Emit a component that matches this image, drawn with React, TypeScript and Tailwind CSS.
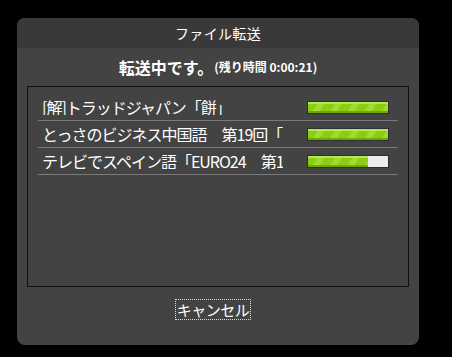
import React from 'react';

type Item = { title: string; progress: number };

const items: Item[] = [
  { title: '[解]トラッドジャパン「餅」', progress: 100 },
  { title: 'とっさのビジネス中国語　第19回「アポイントをとる」', progress: 100 },
  { title: 'テレビでスペイン語「EURO24　第12回」', progress: 75 },
];

function ProgressBar({ value }: { value: number }) {
  return (
    <div className="w-[80px] h-[11px] bg-[#ececec] shadow-[0_0_0_1px_#2f2f2f] shrink-0">
      <div
        className="h-full bg-[repeating-linear-gradient(120deg,#8ccd12_0px,#8ccd12_9px,#9edc34_9px,#9edc34_15px)] shadow-[inset_0_2px_0_#b2e853,inset_0_-2px_0_#6eaa05]"
        style={{ width: `${value}%` }}
      />
    </div>
  );
}

export default function App() {
  return (
    <div className="w-[452px] h-[357px] bg-black pt-[18px] pl-[17px] font-['Noto_Sans_CJK_JP',sans-serif]">
      <div className="w-[402px] h-[327px] bg-[#434343] rounded-[8px] overflow-hidden flex flex-col">
        {/* header */}
        <div className="h-[30px] bg-[#393939] flex items-center justify-center text-white text-[14px] tracking-wide">
          ファイル転送
        </div>

        {/* status */}
        <div className="h-[38px] flex items-center justify-center text-white">
          <span className="text-[16px] font-bold">転送中です。</span>
          <span className="text-[12px] font-bold ml-[1px]">(残り時間 0:00:21)</span>
        </div>

        {/* list */}
        <div className="mx-[10px] h-[201px] border border-[#111] pt-[7px] px-[10px]">
          {items.map((it) => (
            <div
              key={it.title}
              className="h-[27px] border-b border-[#7a7a7a] flex items-center pl-[4px] pr-[10px]"
            >
              <div className="w-[241px] overflow-hidden whitespace-nowrap text-white text-[16px] leading-none tracking-[-1px]">
                {it.title}
              </div>
              <div className="flex-1" />
              <ProgressBar value={it.progress} />
            </div>
          ))}
        </div>

        {/* cancel */}
        <div className="flex justify-center mt-[12px] pr-[10px]">
          <button className="h-[21px] px-[1px] border border-dotted border-[#ddd] text-white text-[15px] leading-none tracking-[-0.5px]">
            キャンセル
          </button>
        </div>
      </div>
    </div>
  );
}
